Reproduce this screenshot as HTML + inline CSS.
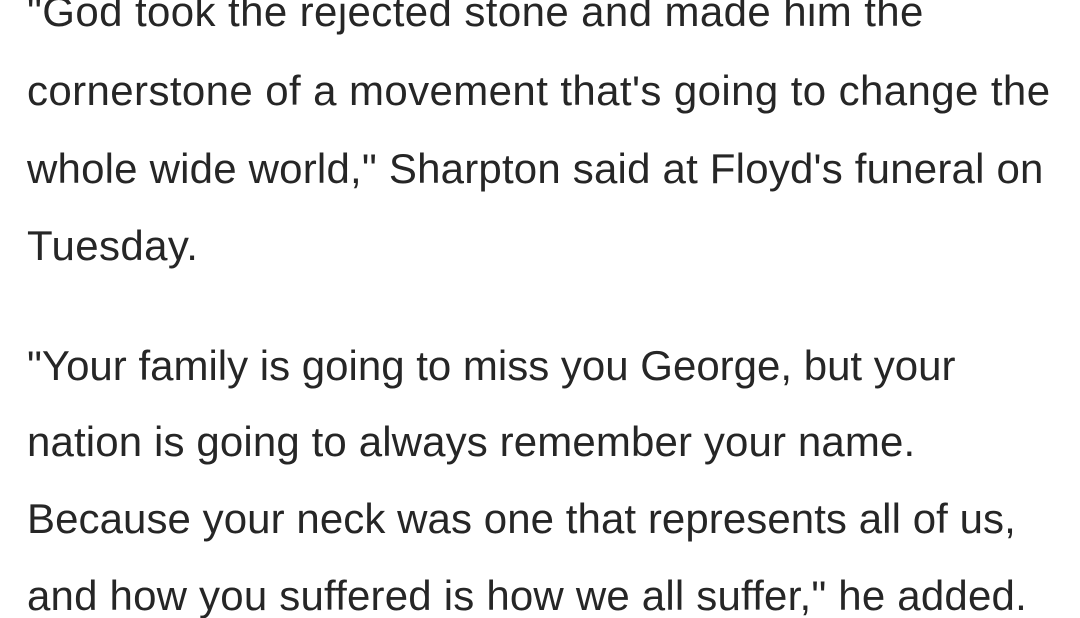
<!DOCTYPE html>
<html><head><meta charset="utf-8"><style>
html,body{margin:0;padding:0;background:#fff;width:1080px;height:618px;overflow:hidden;position:relative}
.l{position:absolute;left:27px;font-family:"Liberation Sans",Arial,sans-serif;font-size:42px;line-height:78px;height:78px;color:#262626;white-space:nowrap;letter-spacing:0.4px}
</style></head><body>
<div class="l" style="top:-27px">"God took the rejected stone and made him the</div>
<div class="l" style="top:52px">cornerstone of a movement that's going to change the</div>
<div class="l" style="top:130px;letter-spacing:0.2px">whole wide world," Sharpton said at Floyd's funeral on</div>
<div class="l" style="top:207px">Tuesday.</div>
<div class="l" style="top:327px;letter-spacing:0px">"Your family is going to miss you George, but your</div>
<div class="l" style="top:403px;letter-spacing:0.13px">nation is going to always remember your name.</div>
<div class="l" style="top:480px;letter-spacing:0.07px">Because your neck was one that represents all of us,</div>
<div class="l" style="top:557px;letter-spacing:0.2px">and how you suffered is how we all suffer," he added.</div>
</body></html>
